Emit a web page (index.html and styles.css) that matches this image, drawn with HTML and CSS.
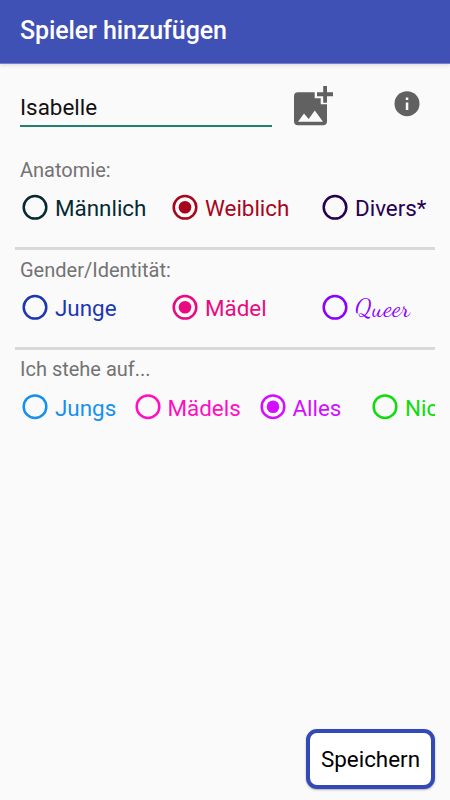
FILE: index.html
```html
<!DOCTYPE html>
<html lang="de">
<head>
<meta charset="utf-8">
<title>Spieler hinzufügen</title>
<link rel="stylesheet" href="styles.css">
</head>
<body>
<header class="bar"><h1>Spieler hinzufügen</h1></header>
<main class="form">
  <div class="name-row">
    <div class="name">Isabelle</div>
    <svg class="photo" width="42" height="42" viewBox="0 0 42 42">
      <path fill="#616161" d="M5 7.3H21.7V13.3H27.7V19.3H34V36.3Q34 40.3 30 40.3H5Q1 40.3 1 36.3V11.3Q1 7.3 5 7.3Z"/>
      <path fill="#616161" d="M30.2 1H34V7.3H40V11.2H34V17.7H30.2V11.2H24V7.3H30.2Z"/>
      <path fill="#fafafa" d="M5 36.7L11 28.5L15.7 34L21.8 25.5L30 36.7Z"/>
    </svg>
    <svg class="info" width="26" height="26" viewBox="0 0 26 26">
      <circle cx="13" cy="12.7" r="12.5" fill="#616161"/>
      <path fill="#fafafa" d="M11.8 6.5H14.3V9H11.8ZM11.8 11.5H14.3V19H11.8Z"/>
    </svg>
  </div>
  <section class="group">
    <h2>Anatomie:</h2>
    <div class="options thirds">
      <div class="option male"><svg class="radio" viewBox="0 0 40 40"><circle class="ring" cx="20" cy="20.3" r="11.3"/></svg><span>Männlich</span></div>
      <div class="option female"><svg class="radio" viewBox="0 0 40 40"><circle class="ring" cx="20" cy="20.3" r="11.3"/><circle class="dot" cx="20" cy="20.3" r="6.3"/></svg><span>Weiblich</span></div>
      <div class="option diverse"><svg class="radio" viewBox="0 0 40 40"><circle class="ring" cx="20" cy="20.3" r="11.3"/></svg><span>Divers*</span></div>
    </div>
  </section>
  <section class="group">
    <h2>Gender/Identität:</h2>
    <div class="options thirds">
      <div class="option boy"><svg class="radio" viewBox="0 0 40 40"><circle class="ring" cx="20" cy="20.3" r="11.3"/></svg><span>Junge</span></div>
      <div class="option girl"><svg class="radio" viewBox="0 0 40 40"><circle class="ring" cx="20" cy="20.3" r="11.3"/><circle class="dot" cx="20" cy="20.3" r="6.3"/></svg><span>Mädel</span></div>
      <div class="option queer"><svg class="radio" viewBox="0 0 40 40"><circle class="ring" cx="20" cy="20.3" r="11.3"/></svg><span class="script">Queer</span></div>
    </div>
  </section>
  <section class="group last">
    <h2>Ich stehe auf...</h2>
    <div class="options quarters">
      <div class="option boys"><svg class="radio" viewBox="0 0 40 40"><circle class="ring" cx="20" cy="19.7" r="11.3"/></svg><span>Jungs</span></div>
      <div class="option girls"><svg class="radio" viewBox="0 0 40 40"><circle class="ring" cx="20" cy="19.7" r="11.3"/></svg><span>Mädels</span></div>
      <div class="option all"><svg class="radio" viewBox="0 0 40 40"><circle class="ring" cx="20" cy="19.7" r="11.3"/><circle class="dot" cx="20" cy="19.7" r="6.3"/></svg><span>Alles</span></div>
      <div class="option none"><svg class="radio" viewBox="0 0 40 40"><circle class="ring" cx="20" cy="19.7" r="11.3"/></svg><span>Nichts</span></div>
    </div>
  </section>
  <button class="save">Speichern</button>
</main>
</body>
</html>
```
FILE: styles.css
```css
* { box-sizing: border-box; }
body {
  margin: 0;
  height: 800px;
  display: flex;
  flex-direction: column;
  overflow: hidden;
  background: #fafafa;
  font-family: Roboto, "Liberation Sans", sans-serif;
}
.bar {
  height: 64px;
  flex: none;
  padding: 16px 20px 0;
  background: #3f51b5;
  border-bottom: 1px solid #7480c9;
  box-shadow: 0 1px 4px rgba(0, 0, 0, .14);
}
h1 {
  margin: 0;
  font-size: 25px;
  font-weight: 500;
  line-height: 30px;
  letter-spacing: -.1px;
  color: #fff;
}
.form {
  flex: 1;
  display: flex;
  flex-direction: column;
  padding: 0 15px 11px;
}
.name-row {
  display: flex;
  height: 90px;
  padding: 21px 0 0 5px;
}
.name {
  width: 252px;
  height: 42px;
  padding-top: 7px;
  border-bottom: 2px solid #23806f;
  font-size: 22.4px;
  line-height: 30px;
  color: #111;
}
.photo { margin-left: 21px; }
.info { margin: 6px 0 0 59px; }
.group {
  height: 96px;
  border-bottom: 3px solid #d9d9d9;
  margin-bottom: 4px;
}
.group.last {
  border: 0;
  margin-top: -1px;
}
h2 {
  margin: 0;
  padding: 3px 0 0 5px;
  height: 33px;
  font-size: 20px;
  font-weight: 400;
  line-height: 26px;
  color: #737373;
}
.last h2 { height: 34px; }
.options {
  display: grid;
  height: 41px;
  overflow: hidden;
}
.thirds { grid-template-columns: 150px 150px 120px; }
.quarters { grid-template-columns: 112.5px 125px 112.5px 112.5px; }
.option {
  display: flex;
  font-size: 22.4px;
  line-height: 40px;
  white-space: nowrap;
}
.option span { padding-top: 1px; }
.radio {
  flex: none;
  width: 40px;
  height: 40px;
}
.ring {
  fill: none;
  stroke: currentColor;
  stroke-width: 2.5;
}
.dot { fill: currentColor; }
.male { color: #062a33; }
.female { color: #a8051c; }
.diverse { color: #260052; }
.boy { color: #1b37b4; }
.girl { color: #ea0a80; }
.queer { color: #8c00ff; }
.boys { color: #1690f0; }
.girls { color: #ff0fc0; }
.all { color: #d40fff; }
.none { color: #0ddc0d; }
.option .script {
  padding-top: 1px;
  font-family: "Dancing Script", cursive;
  font-size: 25px;
  letter-spacing: .5px;
}
.save {
  width: 129px;
  height: 60px;
  margin: auto 0 0 auto;
  padding: 0;
  border: 4px solid #3349b8;
  border-radius: 11px;
  background: #fff;
  box-shadow: 0 1px 2px rgba(0, 0, 0, .3);
  font: 22.4px Roboto, "Liberation Sans", sans-serif;
  color: #000;
}
```
